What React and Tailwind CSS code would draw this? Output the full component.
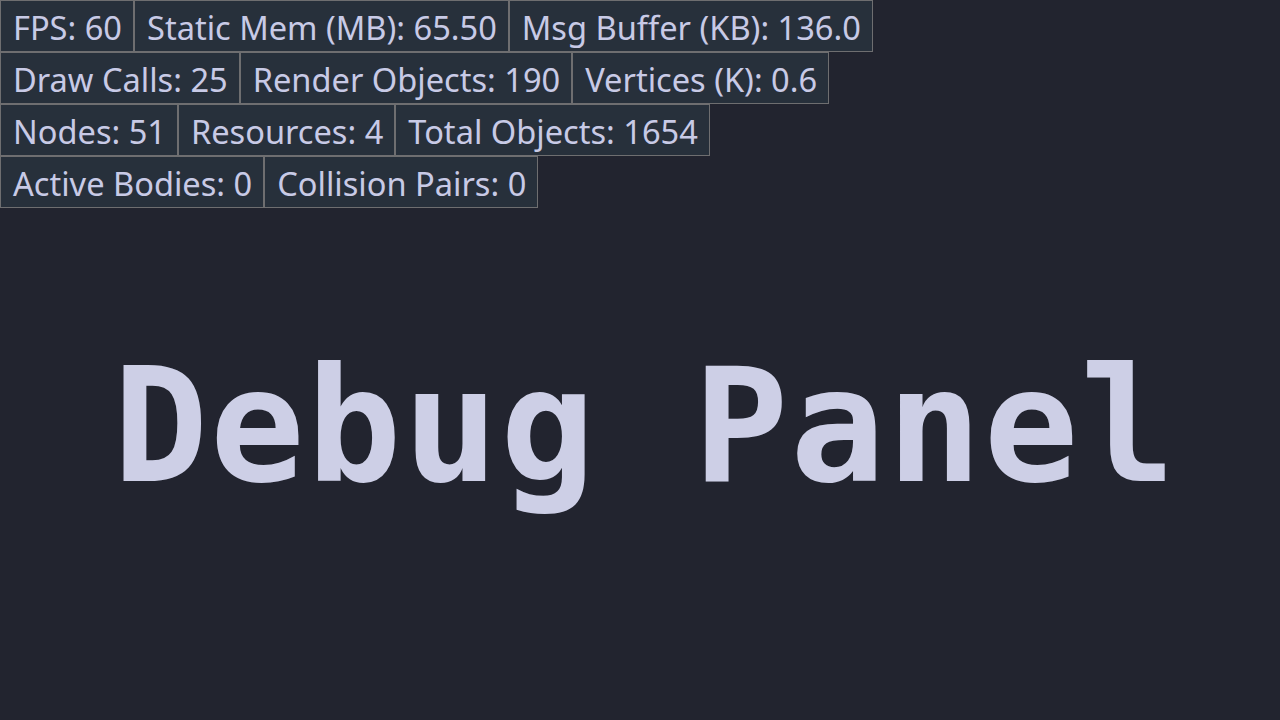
import React from "react";

// stats grouped the way the overlay prints them, one row per group
const statRows = [
  [
    ["FPS", "60"],
    ["Static Mem (MB)", "65.50"],
    ["Msg Buffer (KB)", "136.0"],
  ],
  [
    ["Draw Calls", "25"],
    ["Render Objects", "190"],
    ["Vertices (K)", "0.6"],
  ],
  [
    ["Nodes", "51"],
    ["Resources", "4"],
    ["Total Objects", "1654"],
  ],
  [
    ["Active Bodies", "0"],
    ["Collision Pairs", "0"],
  ],
];

const StatCell = ({ label, value }) => (
  <div className="h-[52px] flex items-center border border-[#6e6e70] bg-[#27303b] pl-[12px] pr-[11px] pt-[3px]">
    <span className="text-[32.6px] leading-[44px] text-[#c8cae6] whitespace-nowrap">
      {label}: {value}
    </span>
  </div>
);

const App = () => {
  return (
    <div
      className="w-full h-screen bg-[#22242f] flex flex-col overflow-hidden"
      style={{ fontFamily: '"Noto Sans", "Open Sans", sans-serif' }}
    >
      {/* Monitor readouts */}
      <div className="flex flex-col items-start">
        {statRows.map((row, i) => (
          <div key={i} className="flex">
            {row.map(([label, value]) => (
              <StatCell key={label} label={label} value={value} />
            ))}
          </div>
        ))}
      </div>

      {/* Title */}
      <div
        className="mt-[126px] pl-[10px] text-center text-[158px] leading-[184px] tracking-[1.6px] font-bold text-[#cdcfe6] whitespace-pre"
        style={{ fontFamily: '"DejaVu Sans Mono", monospace' }}
      >
        Debug Panel
      </div>
    </div>
  );
};

export default App;
